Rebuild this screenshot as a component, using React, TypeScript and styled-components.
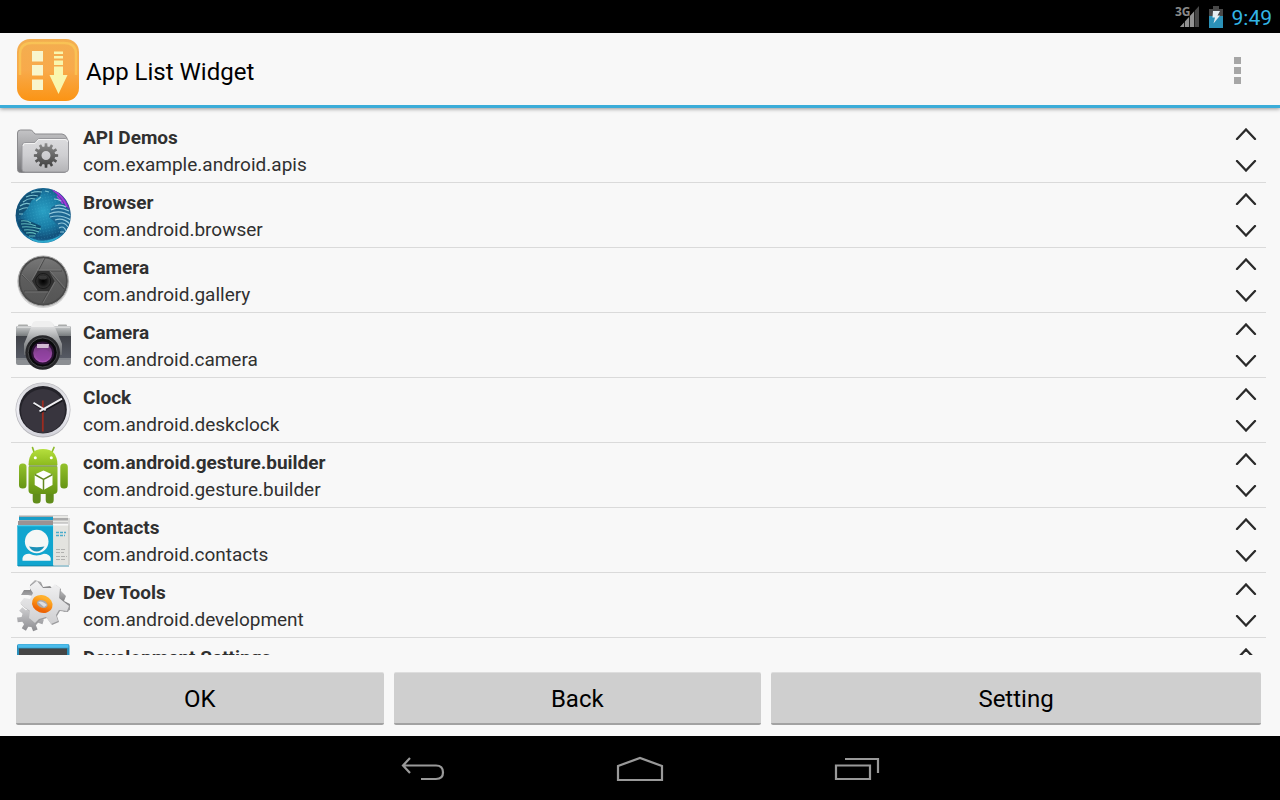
import React from "react";
import styled, { createGlobalStyle } from "styled-components";

const GlobalStyle = createGlobalStyle`
  * { box-sizing: border-box; }
  body { margin: 0; background: #000; font-family: Roboto, "Liberation Sans", sans-serif; }
  button { font-family: inherit; border: 0; margin: 0; padding: 0; background: none; cursor: pointer; }
`;

const Screen = styled.div`
  display: flex;
  flex-direction: column;
  height: 100vh;
  background: #f8f8f8;
`;

const StatusBar = styled.div`
  display: flex;
  flex: none;
  align-items: center;
  justify-content: flex-end;
  gap: 9px;
  height: 33px;
  padding: 0 8px;
  background: #000;
`;

const StatusIcon = styled.svg`
  display: block;
  flex: none;
`;

const NetworkLabel = styled.text`
  font: 700 12px "Open Sans", sans-serif;
  fill: #8a8a8a;
`;

const Time = styled.time`
  padding-top: 2px;
  color: #33b5e5;
  font-size: 21px;
  line-height: 24px;
`;

const ActionBar = styled.header`
  display: flex;
  flex: none;
  align-items: center;
  gap: 7px;
  height: 75px;
  padding: 2px 25px 0 17px;
  border-bottom: 3px solid #3badd9;
  box-shadow: 0 1px 4px rgba(0, 0, 0, 0.4);
`;

const Title = styled.h1`
  flex: 1;
  margin: 0;
  padding-top: 4px;
  color: #000;
  font-size: 24px;
  font-weight: 400;
  line-height: 32px;
`;

const OverflowButton = styled.button`
  display: flex;
  align-items: center;
  justify-content: center;
  width: 36px;
  height: 56px;
`;

const AppList = styled.ul`
  flex: 1;
  min-height: 0;
  margin: 10px 0 0;
  padding: 0 14px 0 11px;
  overflow: hidden;
  list-style: none;
`;

const Row = styled.li`
  display: flex;
  align-items: center;
  gap: 8px;
  height: 65px;
  border-bottom: 1px solid #dadada;
`;

const AppIcon = styled.svg`
  display: block;
  flex: none;
  width: 64px;
  height: 64px;
`;

const Labels = styled.div`
  flex: 1;
  min-width: 0;
  padding-top: 2px;
  color: #303030;
  font-size: 19px;
  line-height: 27px;
`;

const AppName = styled.div`
  font-weight: 700;
`;

const PackageName = styled.div`
  font-weight: 400;
`;

const Movers = styled.div`
  display: flex;
  flex: none;
  flex-direction: column;
`;

const MoveButton = styled.button`
  display: flex;
  align-items: center;
  justify-content: center;
  width: 40px;
  height: 32px;
`;

const Actions = styled.div`
  display: flex;
  flex: none;
  gap: 10px;
  padding: 17px 19px 11px 16px;
`;

const ActionButton = styled.button<{ $share: number }>`
  flex: ${(p) => p.$share} 1 0;
  height: 53px;
  padding-top: 2px;
  border-top: 1px solid #dedede;
  border-bottom: 2px solid #a2a2a2;
  border-radius: 2px;
  background: #cfcfcf;
  color: #000;
  font-size: 24px;
  line-height: 32px;
`;

const NavBar = styled.nav`
  display: flex;
  flex: none;
  justify-content: center;
  height: 64px;
  padding-top: 2px;
  background: #000;
`;

const NavButton = styled.button`
  display: flex;
  align-items: center;
  justify-content: center;
  width: 217px;
  height: 62px;
`;

function gearPath(cx: number, cy: number, outer: number, inner: number, teeth: number, turn = 0) {
  const step = (Math.PI * 2) / teeth;
  const points: string[] = [];
  for (let i = 0; i < teeth; i++) {
    const a = i * step + turn;
    [
      [inner, -0.3],
      [outer, -0.2],
      [outer, 0.2],
      [inner, 0.3],
    ].forEach(([r, k]) => {
      points.push(`${(cx + r * Math.cos(a + k * step)).toFixed(2)} ${(cy + r * Math.sin(a + k * step)).toFixed(2)}`);
    });
  }
  return `M${points.join("L")}Z`;
}

const Gradient = ({ id, from, to, mid }: { id: string; from: string; to: string; mid?: string }) => (
  <linearGradient id={id} x1="0" y1="0" x2="0" y2="1">
    <stop offset="0" stopColor={from} />
    {mid && <stop offset="0.5" stopColor={mid} />}
    <stop offset="1" stopColor={to} />
  </linearGradient>
);

const FolderIcon = () => (
  <AppIcon viewBox="0 0 64 64" aria-hidden="true">
    <defs>
      <Gradient id="folderBack" from="#c4c4c6" to="#77777a" />
      <Gradient id="folderFront" from="#dcdcde" mid="#cfcfd2" to="#b4b4b7" />
      <Gradient id="folderGear" from="#8c8c8c" to="#3f3f3f" />
    </defs>
    <path d="M6.5 15Q6.500 12 9.500 12H19Q21 12 22 13.500L24 16H51Q54 16 56 20V51Q56 54.500 53 54.500H9.500Q6.500 54.500 6.500 51.500Z" fill="url(#folderBack)" stroke="#8b8b8e" />
    <path d="M11 28Q11 24.500 14 24.500H23Q24.500 24.500 25.500 23L26.500 21.500Q27 20.500 29 20.500H54Q57.500 20.500 57.500 24V51Q57.500 54 54 54H14Q11 54 11 51Z" fill="url(#folderFront)" stroke="#98989c" />
    <path d="M12 28Q12 25.500 14.500 25.500H24L27.500 21.500H54Q56.500 21.500 56.500 24" fill="none" stroke="#f4f4f4" />
    <path fillRule="evenodd" d={gearPath(35, 37.5, 12.2, 9.2, 12) + "M39.500 37.500A4.500 4.500 0 1 0 30.500 37.500A4.500 4.500 0 1 0 39.500 37.500Z"} fill="url(#folderGear)" />
  </AppIcon>
);

const GlobeIcon = () => (
  <AppIcon viewBox="0 0 64 64" aria-hidden="true">
    <defs>
      <radialGradient id="ocean" cx="0.5" cy="0.42" r="0.58">
        <stop offset="0" stopColor="#2aa0c4" />
        <stop offset="0.5" stopColor="#1a7da6" />
        <stop offset="0.85" stopColor="#12507b" />
        <stop offset="1" stopColor="#1a74a4" />
      </radialGradient>
      <clipPath id="globe"><circle cx="32.200" cy="32.500" r="27.200" /></clipPath>
      <pattern id="dots" width="3" height="3" patternUnits="userSpaceOnUse" patternTransform="rotate(-12)">
        <rect width="1" height="1" fill="#53c0dc" opacity="0.25" />
      </pattern>
    </defs>
    <circle cx="32.200" cy="32.500" r="27.600" fill="url(#ocean)" />
    <g clipPath="url(#globe)">
      <rect width="64" height="64" fill="url(#dots)" />
      <path d="M39 5Q54 9 60 29L57 27Q50 14 39 5Z" fill="#6a35b5" />
      <path d="M42 7Q52 13 56 24M46 13Q50 17 52 21" stroke="#a33bda" strokeWidth="1.500" fill="none" />
      <path d="M4 32Q6 17 19 9L31 6L29 13L21 17L16 26L9 33Z" fill="#135276" />
      <path d="M8 27Q14 24 17 25M9 23Q14 19 19 21M12 19Q18 14 24 16M15 14Q21 11 27 13M20 10Q25 8 31 9M8 31L12 31M25 18L30 14M34 8L38 9" stroke="#8bd1dc" strokeWidth="1.100" fill="none" opacity="0.85" />
      <path d="M10 36Q20 38 30 43Q29 50 19 55Q7 46 7 39Z" fill="#0f4c70" />
      <path d="M10 38Q16 37 20 40M10 41Q18 40 25 43M11 44Q19 43 30 46M13 47Q20 46 28 49M15 50Q21 49 25 51M18 53L24 53" stroke="#6fcbc8" strokeWidth="1.100" fill="none" opacity="0.85" />
      <path d="M40 25Q46 20 52 21L60 28V44L52 52Q49 43 38 34Z" fill="#1c6893" />
      <path d="M44 23Q50 21 55 24M40 27Q48 23 58 28M38 31Q49 26 60 33M39 34Q50 31 60 37M44 37Q52 34 59 41M47 41Q53 38 57 44M48 45Q53 42 55 48M43 16Q47 16 50 18M49 49L53 49" stroke="#9ed3e3" strokeWidth="1.200" fill="none" opacity="0.9" />
      <path d="M15 52Q32 64 51 51Q34 71 15 52Z" fill="#37c4e4" opacity="0.7" />
    </g>
  </AppIcon>
);

const ShutterIcon = () => (
  <AppIcon viewBox="0 0 64 64" aria-hidden="true">
    <defs>
      <Gradient id="shutter" from="#777" mid="#5c5c5c" to="#555" />
      <radialGradient id="aperture"><stop offset="0" stopColor="#000" /><stop offset="0.5" stopColor="#151515" /><stop offset="1" stopColor="#3a3a3a" /></radialGradient>
    </defs>
    <circle cx="32.200" cy="34" r="26" fill="#000" opacity="0.15" />
    <circle cx="32.200" cy="33" r="25" fill="#4a4a4a" stroke="#aaa" />
    <circle cx="32.200" cy="33" r="22.800" fill="url(#shutter)" />
    <path d="M26 23L51 23M38 23L53 41M43 33L31 55M38 43L13 43M27 43L11 27M22 33L34 10" stroke="#484848" fill="none" />
    <path d="M26 22L50 22M39 23L54 40M44 34L32 55M37 44L14 44M26 42L11 26M21 32L33 10" stroke="#888" strokeWidth="0.500" fill="none" />
    <path d="M27 23H38L43.500 33L38 43H27L21 33Z" fill="#303030" />
    <circle cx="32.200" cy="33" r="7.500" fill="url(#aperture)" stroke="#171717" />
    <ellipse cx="32" cy="29.500" rx="4" ry="2" fill="#444" opacity="0.7" />
  </AppIcon>
);

const CameraIcon = () => (
  <AppIcon viewBox="0 0 64 64" aria-hidden="true">
    <defs>
      <Gradient id="cameraTop" from="#c8cacb" to="#737779" />
      <Gradient id="cameraBody" from="#3f4147" to="#565a64" />
      <Gradient id="prism" from="#fafafa" mid="#a5a7a9" to="#65686c" />
      <Gradient id="cameraLens" from="#643070" to="#b057bb" />
    </defs>
    <rect x="7" y="11.500" width="10" height="4" rx="1" fill="#a9abaa" />
    <rect x="47" y="11.500" width="9" height="4" rx="1" fill="#a9abaa" />
    <rect x="5" y="13" width="55" height="39" rx="2" fill="#8c8f93" />
    <rect x="5" y="13.500" width="55" height="10" rx="2" fill="url(#cameraTop)" />
    <rect x="5" y="23" width="55" height="22" fill="url(#cameraBody)" />
    <path d="M6 14H59" stroke="#ededed" />
    <path d="M5.500 46H59.500" stroke="#777b81" />
    <path d="M25 8H38Q41 8 43 12L51 31V42H13V31L21 12Q22 8 25 8Z" fill="url(#prism)" />
    <path d="M25 8H38Q41 8 42 12L43 14H20L21 12Q22 8 25 8Z" fill="#efefef" />
    <circle cx="31.700" cy="39.500" r="17.300" fill="#27272a" />
    <circle cx="31.700" cy="39.500" r="14.500" fill="#09090b" stroke="#5d5e62" strokeWidth="0.700" />
    <circle cx="31.700" cy="40" r="10.500" fill="url(#cameraLens)" stroke="#2b1334" strokeWidth="2" />
    <path d="M26 31H38L37.500 35H26Z" fill="#d2bbd4" />
    <ellipse cx="32" cy="42" rx="7" ry="6" fill="#8d3fa0" opacity="0.6" />
  </AppIcon>
);

const ClockIcon = () => (
  <AppIcon viewBox="0 0 64 64" aria-hidden="true">
    <defs><Gradient id="clockRim" from="#d4d4d8" mid="#efeff5" to="#d2d2d9" /></defs>
    <circle cx="32" cy="32" r="27.500" fill="#b7b7bc" />
    <circle cx="32" cy="31.700" r="26.800" fill="url(#clockRim)" />
    <circle cx="32" cy="31.700" r="23.800" fill="#24232a" />
    <circle cx="32" cy="33" r="22" fill="#38353e" />
    <path d="M31.800 22.500V53.500" stroke="#9b2b20" strokeWidth="1.800" />
    <path d="M29 34.500L51 22.500M23 26L35 33.500" stroke="#17161b" strokeWidth="2" />
    <path d="M28.500 33.300L51 20.700M22.500 24.800L34.700 32.300" stroke="#efeff2" strokeWidth="1.900" />
  </AppIcon>
);

const AndroidIcon = () => (
  <AppIcon viewBox="0 0 64 64" aria-hidden="true">
    <defs>
      <Gradient id="robotHead" from="#b5df3d" to="#8cba1d" />
      <Gradient id="robotBody" from="#94c22b" to="#659414" />
    </defs>
    <path d="M23 9L21.500 4.500M41 9L43 4.500" stroke="#8dbb2a" strokeWidth="1.700" strokeLinecap="round" />
    <rect x="21.700" y="46" width="8" height="14.500" rx="3.500" fill="#618d1a" />
    <rect x="34.700" y="46" width="8" height="14.500" rx="3.500" fill="#618d1a" />
    <rect x="8" y="20.500" width="7.500" height="25" rx="3.500" fill="url(#robotBody)" />
    <rect x="49.300" y="20.500" width="7.500" height="25" rx="3.500" fill="url(#robotBody)" />
    <path d="M17.500 22.300Q17.500 6 32 6Q46.500 6 46.500 22.300Z" fill="url(#robotHead)" />
    <circle cx="24.300" cy="14.700" r="1.500" fill="#fff" />
    <circle cx="40.300" cy="14.700" r="1.500" fill="#fff" />
    <path d="M17.500 23.500H46.500V47Q46.500 51 42.500 51H21.500Q17.500 51 17.500 47Z" fill="url(#robotBody)" />
    <path d="M18 23H46" stroke="#4f741c" />
    <path d="M32.500 27.500L41.500 31.500V42L32.500 47L23.700 42V31.500Z" fill="#fff" />
    <path d="M23.700 31.500L32.500 36.500L41.500 31.500M32.500 36.500V47" stroke="#658a22" strokeWidth="1.500" fill="none" />
  </AppIcon>
);

const ContactsIcon = () => (
  <AppIcon viewBox="0 0 64 64" aria-hidden="true">
    <rect x="8" y="7.500" width="49" height="8" fill="#aaa" />
    <path d="M8 10.500H42" stroke="#179cc7" strokeWidth="3" />
    <path d="M42 9H57M42 13.500H57" stroke="#e8e8e5" strokeWidth="2" />
    <rect x="7" y="13" width="35" height="4" fill="#9a9293" />
    <rect x="6.300" y="17.500" width="36" height="40.500" fill="#11a5cf" />
    <path d="M6.300 18H42" stroke="#27c0e6" />
    <rect x="42.300" y="17.500" width="16" height="39.500" fill="#e3e3df" />
    <path d="M58 10V57" stroke="#bcbcb9" />
    <circle cx="25.700" cy="33.500" r="11.800" fill="#f5f7f6" />
    <path d="M18 38.500Q25.700 40 33.500 38.500Q30 43.500 25.700 43.500Q21 43.500 18 38.500Z" fill="#1b91b8" />
    <path d="M11.500 52.800V50Q13 45.500 18.500 45.800Q25.500 49 33 45.800Q38.500 46 39.700 50V52.800Z" fill="#f5f7f6" />
    <path d="M45 24.500H55M45 27.500H54" stroke="#4aaccb" strokeWidth="1.700" strokeDasharray="3 1" />
    <path d="M45 41.500H55M45 44.500H53M45 48.500H56M45 51.500H54" stroke="#b0b0ae" strokeWidth="1.200" strokeDasharray="4 1" />
    <path d="M7 58H58" stroke="#08708f" strokeWidth="0.700" />
  </AppIcon>
);

const GearsIcon = () => (
  <AppIcon viewBox="0 0 64 64" aria-hidden="true">
    <defs>
      <Gradient id="gearDark" from="#b9b9ba" mid="#828284" to="#aaaaac" />
      <Gradient id="gearLight" from="#f2f2f3" to="#cfcfd1" />
      <Gradient id="gearSmall" from="#d6d6d8" to="#8c8c90" />
      <Gradient id="gearRing" from="#ffb02c" mid="#f98d13" to="#ed6507" />
    </defs>
    <path d="M19 12L24 7L30 9L32 14L39 13L43 17L28 24L17 22L10 22L13 17L19 17Z" fill="url(#gearDark)" />
    <path d="M43 20L50 18L55 23L53 28L59 31L59 37L53 39L49 34Z" fill="url(#gearDark)" />
    <path d={gearPath(19.5, 45, 13.5, 9, 7, 0.3)} fill="url(#gearSmall)" />
    <path d="M19 14L27 9L33 16L41 16L45 12L50 16L49 26L59 34L57 39L49 38L46 43L48 49L41 52L36 45L29 47L25 51L19 46L20 39L14 35L10 31L14 26L20 27L22 21Z" fill="#9a9a9c" />
    <path d="M18 14L26 8L32 15L40 15L44 11L49 15L48 25L58 33L56 38L48 37L45 42L47 48L40 51L35 44L28 46L24 50L18 45L19 38L13 34L9 30L13 25L19 26L22 20Z" fill="url(#gearLight)" />
    <ellipse cx="31.300" cy="31" rx="8" ry="6.200" transform="rotate(20 31.300 31)" fill="#a9a9ad" stroke="url(#gearRing)" strokeWidth="5" />
    <path d="M27 29Q31 27 36 32L33 34Z" fill="#dedee1" />
  </AppIcon>
);

const SettingsIcon = () => (
  <AppIcon viewBox="0 0 64 64" aria-hidden="true">
    <rect x="6" y="6" width="52.500" height="52" rx="2" fill="#2990bd" />
    <path d="M7 8H57.500" stroke="#4cbceb" strokeWidth="3.500" />
    <rect x="8" y="10.500" width="48" height="44" fill="#454545" />
  </AppIcon>
);

const apps = [
  { name: "API Demos", pkg: "com.example.android.apis", Icon: FolderIcon },
  { name: "Browser", pkg: "com.android.browser", Icon: GlobeIcon },
  { name: "Camera", pkg: "com.android.gallery", Icon: ShutterIcon },
  { name: "Camera", pkg: "com.android.camera", Icon: CameraIcon },
  { name: "Clock", pkg: "com.android.deskclock", Icon: ClockIcon },
  { name: "com.android.gesture.builder", pkg: "com.android.gesture.builder", Icon: AndroidIcon },
  { name: "Contacts", pkg: "com.android.contacts", Icon: ContactsIcon },
  { name: "Dev Tools", pkg: "com.android.development", Icon: GearsIcon },
  { name: "Development Settings", pkg: "com.android.settings", Icon: SettingsIcon },
];

const Chevron = ({ down }: { down?: boolean }) => (
  <svg width="22" height="12" viewBox="0 0 22 12" fill="none" stroke="#2a2a2a" strokeWidth="2.300" strokeLinecap="round" aria-hidden="true">
    <path d={down ? "M2 1L11 10.500L20 1" : "M2 11L11 1.500L20 11"} />
  </svg>
);

const Logo = () => (
  <svg width="62" height="62" viewBox="0 0 62 62" aria-hidden="true">
    <defs><Gradient id="logoFill" from="#f3ae50" mid="#f8aa4b" to="#fb9414" /></defs>
    <rect width="62" height="62" rx="13" fill="url(#logoFill)" />
    <path d="M3 36V15Q3 4 15 4H47Q59 4 59 15V36" fill="none" stroke="#fbd05a" strokeWidth="2.500" opacity="0.6" />
    <path d="M15 12H26V22.500H15ZM15 26H26V36.500H15ZM15 40.500H26V51H15Z" fill="#f8f5cc" />
    <path d="M37 12.500H46V15H37ZM37 17H46V19.500H37ZM37 21.500H46V26H37ZM37 27.500H46V36H50.500L41.500 55L32.500 36H37Z" fill="#f9f6ae" />
  </svg>
);

export default function App() {
  return (
    <Screen>
      <GlobalStyle />
      <StatusBar>
        <StatusIcon width="25" height="24" viewBox="0 0 25 24" aria-label="3G signal">
          <path d="M5 22L24 1V22Z" fill="#474747" />
          <path d="M5 22L20 5.500V22Z" fill="#929292" />
          <path d="M9.500 12V22M14.500 8V22M19.500 3V22" stroke="#000" strokeWidth="0.800" />
          <path d="M0 0H14V11L9 14H0Z" fill="#000" />
          <NetworkLabel x="0" y="11">3G</NetworkLabel>
        </StatusIcon>
        <StatusIcon width="14" height="22" viewBox="0 0 14 22" aria-label="Battery charging">
          <path d="M4 0H10V3H14V22H0V3H4Z" fill="#484848" />
          <path d="M0 10H14V22H0Z" fill="#2b91b7" />
          <path d="M4 5H11L8.500 9.500H11L4.500 17.500L6 11.500H3.500Z" fill="#e8eff2" />
        </StatusIcon>
        <Time>9:49</Time>
      </StatusBar>
      <ActionBar>
        <Logo />
        <Title>App List Widget</Title>
        <OverflowButton aria-label="More options">
          <svg width="7" height="27" viewBox="0 0 7 27" fill="#a6a6a6" aria-hidden="true">
            <path d="M0 0H7V7H0ZM0 10H7V17H0ZM0 20H7V27H0Z" />
          </svg>
        </OverflowButton>
      </ActionBar>
      <AppList>
        {apps.map(({ name, pkg, Icon }) => (
          <Row key={pkg}>
            <Icon />
            <Labels>
              <AppName>{name}</AppName>
              <PackageName>{pkg}</PackageName>
            </Labels>
            <Movers>
              <MoveButton aria-label={`Move ${name} up`}><Chevron /></MoveButton>
              <MoveButton aria-label={`Move ${name} down`}><Chevron down /></MoveButton>
            </Movers>
          </Row>
        ))}
      </AppList>
      <Actions>
        <ActionButton $share={3}>OK</ActionButton>
        <ActionButton $share={3}>Back</ActionButton>
        <ActionButton $share={4}>Setting</ActionButton>
      </Actions>
      <NavBar>
        <NavButton aria-label="Back">
          <svg width="44" height="24" viewBox="0 0 44 24" fill="none" stroke="#999" strokeWidth="2.200" aria-hidden="true">
            <path d="M9 1L2 8.500L9 16M2 8.500H35Q42 8.500 42 15.500Q42 22 35 22H20" />
          </svg>
        </NavButton>
        <NavButton aria-label="Home">
          <svg width="48" height="26" viewBox="0 0 48 26" fill="none" stroke="#999" strokeWidth="2.200" aria-hidden="true">
            <path d="M2 24V10L24 2L46 10V24Z" />
          </svg>
        </NavButton>
        <NavButton aria-label="Recent apps">
          <svg width="46" height="24" viewBox="0 0 46 24" fill="none" stroke="#999" strokeWidth="2.200" aria-hidden="true">
            <path d="M2 8.500H36V22H2ZM11 2H44V16" />
          </svg>
        </NavButton>
      </NavBar>
    </Screen>
  );
}
